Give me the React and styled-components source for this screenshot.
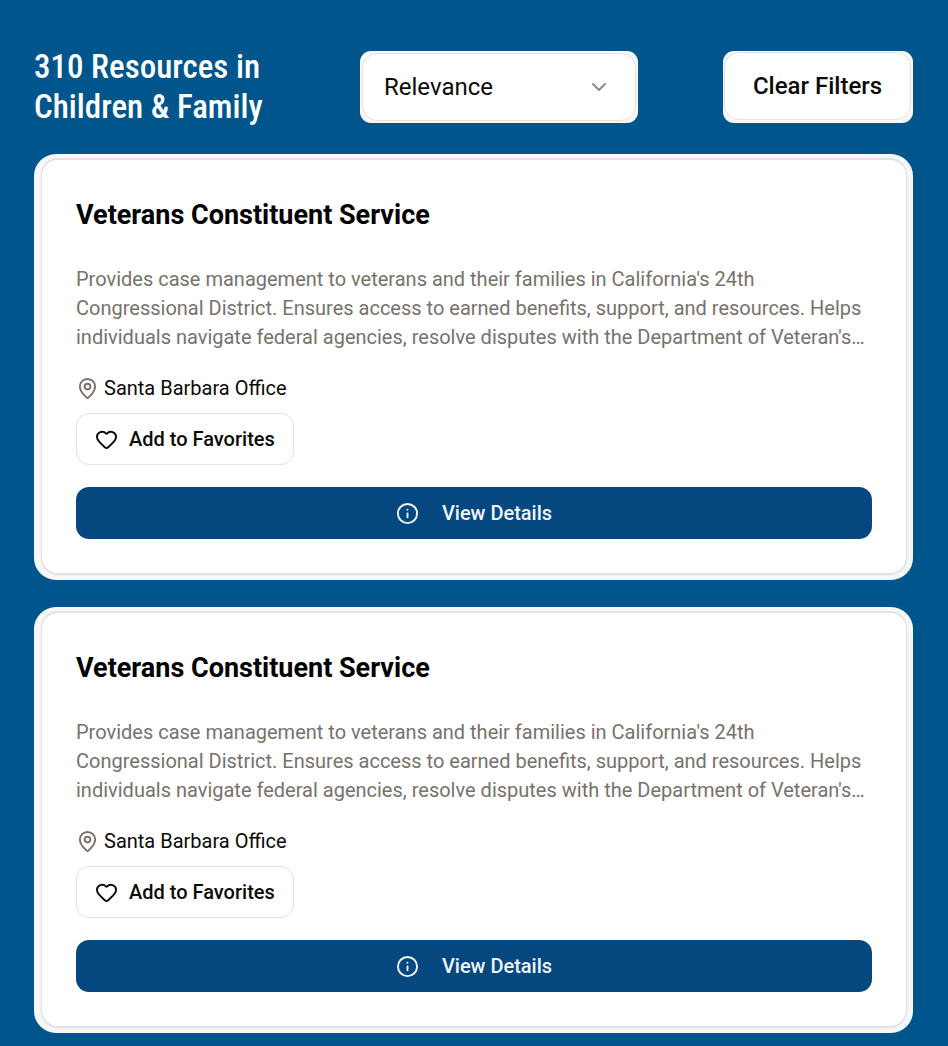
import React from "react";
import styled, { createGlobalStyle } from "styled-components";
import { ChevronDown, Heart, Info, MapPin } from "lucide-react";

const GlobalStyle = createGlobalStyle`
  * { box-sizing: border-box; }
  body {
    margin: 0;
    background: #00568c;
    font-family: Roboto, "Liberation Sans", sans-serif;
    color: #0c0a09;
  }
  h1, h2, p { margin: 0; }
  button, select { font: inherit; color: inherit; cursor: pointer; }
`;

const Page = styled.main`
  padding: 47px 35px 13px 34px;
`;

const Header = styled.header`
  display: flex;
  justify-content: space-between;
  align-items: flex-start;
  margin-bottom: 27px;
`;

const Heading = styled.h1`
  width: 241px;
  font-family: "Roboto Condensed", Roboto, sans-serif;
  font-size: 33px;
  line-height: 40px;
  font-weight: 500;
  color: #fff;
`;

const ControlFrame = styled.div`
  margin-top: 4px;
  height: 72px;
  padding: ${(p) => p.$pad};
  border-radius: 11px;
  background: #f8f8f9;
`;

const SelectWrap = styled.div`
  position: relative;
  width: 274px;
  height: 68px;
  svg {
    position: absolute;
    right: 25px;
    top: 22px;
    color: #8c8988;
    pointer-events: none;
  }
`;

const Select = styled.select`
  appearance: none;
  width: 100%;
  height: 100%;
  padding: 0 21px;
  border: 1px solid #e4e2e1;
  border-radius: 15px;
  background: #fff;
  font-size: 24px;
`;

const ClearButton = styled.button`
  width: 187px;
  height: 68px;
  padding: 0;
  border: 1px solid #e4e2e1;
  border-radius: 15px;
  background: #fff;
  font-size: 24px;
  font-weight: 500;
`;

const CardList = styled.div`
  display: grid;
  gap: 27px;
`;

const CardFrame = styled.article`
  padding: 4px 6px 6px 7px;
  border-radius: 22px;
  background: #f7f8fa;
`;

const CardBody = styled.div`
  padding: 38px 34px 34px;
  border: 1px solid #e2e2e2;
  border-top-width: 2px;
  border-radius: 17px;
  background: #fff;
  box-shadow: 0 1px 2px rgba(0, 0, 0, 0.1);
`;

const CardTitle = styled.h2`
  font-size: 27px;
  line-height: 34px;
  font-weight: 700;
  color: #000;
`;

const Description = styled.p`
  margin-top: 33px;
  font-size: 20px;
  line-height: 29px;
  color: #78716c;
`;

const Location = styled.p`
  display: flex;
  align-items: center;
  gap: 5px;
  margin-top: 22px;
  font-size: 20px;
  line-height: 28px;
  svg { color: #78716c; }
`;

const FavoriteButton = styled.button`
  display: flex;
  align-items: center;
  gap: 11px;
  height: 52px;
  margin-top: 11px;
  padding: 0 18px;
  border: 1px solid #e4e2e1;
  border-radius: 13px;
  background: #fff;
  font-size: 20px;
  font-weight: 500;
`;

const DetailsButton = styled.button`
  display: flex;
  align-items: center;
  justify-content: center;
  gap: 23px;
  width: 100%;
  height: 52px;
  margin-top: 22px;
  border: 0;
  border-radius: 13px;
  background: #04487f;
  color: #f1f5f9;
  font-size: 20px;
  font-weight: 500;
`;

const resources = [1, 2].map((id) => ({
  id,
  title: "Veterans Constituent Service",
  description:
    "Provides case management to veterans and their families in California's 24th Congressional District. Ensures access to earned benefits, support, and resources. Helps individuals navigate federal agencies, resolve disputes with the Department of Veteran's…",
  location: "Santa Barbara Office",
}));

function ResourceCard({ title, description, location }) {
  return (
    <CardFrame>
      <CardBody>
        <CardTitle>{title}</CardTitle>
        <Description>{description}</Description>
        <Location>
          <MapPin size={23} strokeWidth={2} />
          {location}
        </Location>
        <FavoriteButton type="button">
          <Heart size={23} strokeWidth={2} />
          Add to Favorites
        </FavoriteButton>
        <DetailsButton type="button">
          <Info size={23} strokeWidth={2} />
          View Details
        </DetailsButton>
      </CardBody>
    </CardFrame>
  );
}

export default function App() {
  return (
    <>
      <GlobalStyle />
      <Page>
        <Header>
          <Heading>310 Resources in Children &amp; Family</Heading>
          <ControlFrame $pad="2px">
            <SelectWrap>
              <Select aria-label="Sort by" defaultValue="relevance">
                <option value="relevance">Relevance</option>
                <option value="name">Name</option>
              </Select>
              <ChevronDown size={24} strokeWidth={2} />
            </SelectWrap>
          </ControlFrame>
          <ControlFrame $pad="1px 2px 3px 1px">
            <ClearButton type="button">Clear Filters</ClearButton>
          </ControlFrame>
        </Header>
        <CardList>
          {resources.map((r) => (
            <ResourceCard key={r.id} {...r} />
          ))}
        </CardList>
      </Page>
    </>
  );
}
